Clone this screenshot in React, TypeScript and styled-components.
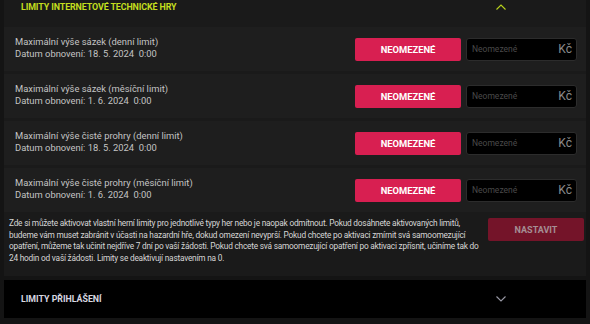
import React from "react";
import styled, { createGlobalStyle } from "styled-components";

interface Limit {
  id: string;
  title: string;
  renewal: string;
}

const limits: Limit[] = [
  { id: "bet-day", title: "Maximální výše sázek (denní limit)", renewal: "18. 5. 2024\u00a0\u00a00:00" },
  { id: "bet-month", title: "Maximální výše sázek (měsíční limit)", renewal: "1. 6. 2024\u00a0\u00a00:00" },
  { id: "loss-day", title: "Maximální výše čisté prohry (denní limit)", renewal: "18. 5. 2024\u00a0\u00a00:00" },
  { id: "loss-month", title: "Maximální výše čisté prohry (měsíční limit)", renewal: "1. 6. 2024\u00a0\u00a00:00" },
];

const Chevron = ({ up, color }: { up?: boolean; color: string }) => (
  <svg width="10" height="6" viewBox="0 0 10 6" fill="none">
    <path
      d={up ? "M0.5 5.5 L5 1 L9.5 5.5" : "M0.5 0.5 L5 5 L9.5 0.5"}
      stroke={color}
      strokeWidth="1.1"
    />
  </svg>
);

const App = () => {
  return (
    <>
      <GlobalStyle />
      <Page>
        <Panel>
          <PanelHeader>
            <HeaderTitle>Limity internetové technické hry</HeaderTitle>
            <Chevron up color="#b9d41c" />
          </PanelHeader>
          <Rows>
            {limits.map((limit) => (
              <Row key={limit.id}>
                <Label>
                  <span>{limit.title}</span>
                  <span>Datum obnovení: {limit.renewal}</span>
                </Label>
                <Controls>
                  <UnlimitedButton>Neomezené</UnlimitedButton>
                  <AmountField>
                    <AmountInput placeholder="Neomezené" />
                    <Currency>Kč</Currency>
                  </AmountField>
                </Controls>
              </Row>
            ))}
          </Rows>
          <Footer>
            <Info>
              Zde si můžete aktivovat vlastní herní limity pro jednotlivé typy her nebo je naopak
              odmítnout. Pokud dosáhnete aktivovaných limitů, budeme vám muset zabránit v účasti na
              hazardní hře, dokud omezení nevyprší. Pokud chcete po aktivaci zmírnit svá
              samoomezující opatření, můžeme tak učinit nejdříve 7 dní po vaší žádosti. Pokud chcete
              svá samoomezující opatření po aktivaci zpřísnit, učiníme tak do 24 hodin od vaší
              žádosti. Limity se deaktivují nastavením na 0.
            </Info>
            <SubmitButton disabled>Nastavit</SubmitButton>
          </Footer>
        </Panel>
        <CollapsedPanel>
          <CollapsedTitle>Limity přihlášení</CollapsedTitle>
          <Chevron color="#9a9aa6" />
        </CollapsedPanel>
      </Page>
    </>
  );
};

export default App;

const GlobalStyle = createGlobalStyle`
  body {
    margin: 0;
    background: #141414;
    font-family: Roboto, "Liberation Sans", sans-serif;
  }
`;

const Page = styled.div`
  width: 590px;
  height: 324px;
  box-sizing: border-box;
  overflow: hidden;
  padding: 0 4px;
  display: flex;
  flex-direction: column;
  gap: 4px;
`;

const Panel = styled.section`
  background: #1a1a1a;
  display: flex;
  flex-direction: column;
`;

const PanelHeader = styled.div`
  height: 27px;
  box-sizing: border-box;
  padding: 2px 80px 0 17px;
  display: flex;
  justify-content: space-between;
  align-items: flex-start;

  svg {
    margin-top: 2px;
  }
`;

const HeaderTitle = styled.h2`
  margin: 0;
  font-size: 8.9px;
  line-height: 11px;
  font-weight: 700;
  text-transform: uppercase;
  color: #c3de1e;
  letter-spacing: -0.1px;
`;

const Rows = styled.div`
  display: flex;
  flex-direction: column;
  gap: 3px;
`;

const Row = styled.div`
  height: 44px;
  box-sizing: border-box;
  padding: 0 9px 0 11px;
  background: #1e1e1e;
  display: flex;
  align-items: center;
  justify-content: space-between;
`;

const Label = styled.div`
  display: flex;
  flex-direction: column;
  margin-bottom: 2px;
  font-size: 9.4px;
  line-height: 12px;
  color: #c4c4c4;
`;

const Controls = styled.div`
  display: flex;
  gap: 5px;
`;

const UnlimitedButton = styled.button`
  width: 106px;
  height: 23px;
  border: none;
  border-radius: 2px;
  background: #d81f51;
  color: #fff;
  font-family: Roboto, "Liberation Sans", sans-serif;
  font-size: 9.4px;
  font-weight: 700;
  text-transform: uppercase;
  cursor: pointer;
`;

const AmountField = styled.label`
  width: 111px;
  height: 23px;
  box-sizing: border-box;
  border: 1px solid #2c2c2c;
  border-radius: 3px;
  background: #000;
  display: flex;
  align-items: center;
  padding: 0 4px 0 5px;
`;

const AmountInput = styled.input`
  flex: 1;
  min-width: 0;
  border: none;
  outline: none;
  padding: 0;
  background: transparent;
  color: #ddd;
  font-family: Roboto, "Liberation Sans", sans-serif;
  font-size: 8.5px;

  &::placeholder {
    color: #4a4a4a;
  }
`;

const Currency = styled.span`
  font-size: 12px;
  color: #8a8a8a;
`;

const Footer = styled.div`
  height: 64px;
  box-sizing: border-box;
  padding: 6px 2px 0 5px;
  display: flex;
  justify-content: space-between;
  align-items: flex-start;
`;

const Info = styled.p`
  margin: 0;
  width: 472px;
  font-size: 8.3px;
  line-height: 11.5px;
  letter-spacing: -0.22px;
  color: #d6d6d6;
`;

const SubmitButton = styled.button`
  width: 96px;
  height: 23px;
  border: none;
  border-radius: 2px;
  background: #741429;
  color: #a58e94;
  font-family: Roboto, "Liberation Sans", sans-serif;
  font-size: 9px;
  font-weight: 700;
  text-transform: uppercase;
`;

const CollapsedPanel = styled.div`
  height: 38px;
  box-sizing: border-box;
  padding: 0 80px 0 17px;
  background: #000;
  display: flex;
  align-items: center;
  justify-content: space-between;
`;

const CollapsedTitle = styled.h2`
  margin: 0;
  font-size: 8.8px;
  font-weight: 700;
  text-transform: uppercase;
  color: #d8d8e0;
`;
